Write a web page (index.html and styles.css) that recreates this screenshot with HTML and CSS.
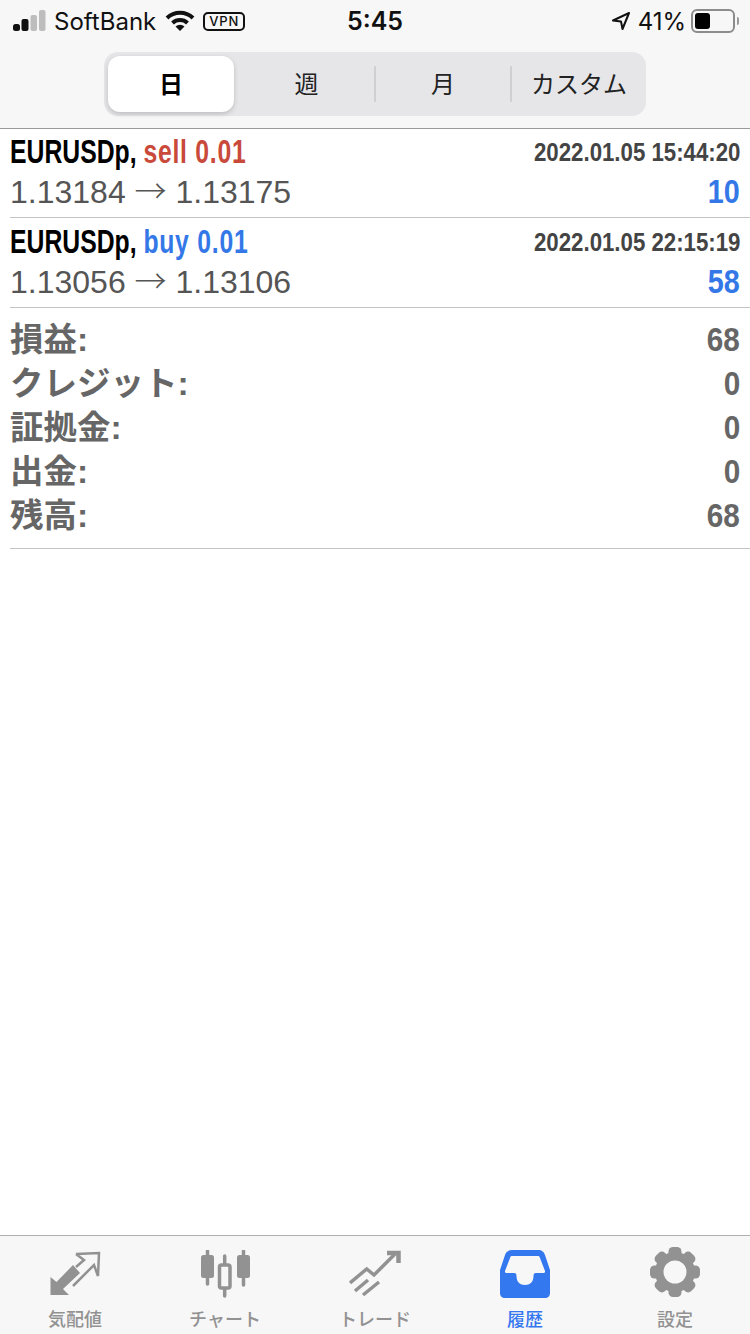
FILE: index.html
```html
<!DOCTYPE html>
<html lang="ja">
<head>
    <meta charset="UTF-8">
    <meta name="viewport" content="width=device-width, initial-scale=1.0">
    <title>履歴</title>
    <link rel="stylesheet" href="styles.css">
</head>
<body>
    <header class="top">
        <div class="status">
            <div class="status-left">
                <svg class="signal" width="33" height="22" viewBox="0 0 33 22">
                    <rect x="0" y="14" width="7" height="7" rx="2.500" fill="#111"/>
                    <rect x="8.500" y="9" width="7" height="12" rx="2" fill="#111"/>
                    <rect x="17.500" y="5" width="6.500" height="16" rx="2" fill="#bdbdbd"/>
                    <rect x="26" y="0" width="6.500" height="21" rx="2" fill="#bdbdbd"/>
                </svg>
                <span class="carrier">SoftBank</span>
                <svg class="wifi" width="30" height="22" viewBox="0 0 30 22">
                    <path d="M2 8 A19 19 0 0 1 28 8" fill="none" stroke="#111" stroke-width="4"/>
                    <path d="M7.500 13 A11 11 0 0 1 22.500 13" fill="none" stroke="#111" stroke-width="4"/>
                    <path d="M15 21 L10.500 16.500 A6.500 6.500 0 0 1 19.500 16.500 Z" fill="#111"/>
                </svg>
                <span class="vpn">VPN</span>
            </div>
            <div class="clock">5:45</div>
            <div class="status-right">
                <svg class="loc" width="20" height="20" viewBox="0 0 20 20">
                    <path d="M18 2 L2 9.500 L10 10.500 L11.500 18 Z" fill="none" stroke="#111" stroke-width="2" stroke-linejoin="round"/>
                </svg>
                <span class="pct">41%</span>
                <div class="battery"><div class="battery-fill"></div></div>
                <div class="battery-tip"></div>
            </div>
        </div>
        <div class="segments">
            <div class="seg seg-active"><span class="seg-text">日</span></div>
            <div class="seg seg-week"><span class="seg-text">週</span></div>
            <div class="seg seg-month"><span class="seg-text">月</span></div>
            <div class="seg seg-custom"><span class="seg-text">カスタム</span></div>
        </div>
    </header>

    <main>
        <div class="deal">
            <div class="line line-top">
                <div class="deal-name">EURUSDp, <span class="sell">sell 0.01</span></div>
                <div class="deal-date">2022.01.05 15:44:20</div>
            </div>
            <div class="line line-bottom">
                <div class="deal-price">1.13184 <span class="arrow">→</span> 1.13175</div>
                <div class="deal-profit">10</div>
            </div>
        </div>
        <div class="deal deal-second">
            <div class="line line-top">
                <div class="deal-name">EURUSDp, <span class="buy">buy 0.01</span></div>
                <div class="deal-date">2022.01.05 22:15:19</div>
            </div>
            <div class="line line-bottom">
                <div class="deal-price">1.13056 <span class="arrow">→</span> 1.13106</div>
                <div class="deal-profit">58</div>
            </div>
        </div>
        <div class="summary">
            <div class="sum-row"><span class="sum-label">損益:</span><span class="sum-value">68</span></div>
            <div class="sum-row"><span class="sum-label">クレジット:</span><span class="sum-value">0</span></div>
            <div class="sum-row"><span class="sum-label">証拠金:</span><span class="sum-value">0</span></div>
            <div class="sum-row"><span class="sum-label">出金:</span><span class="sum-value">0</span></div>
            <div class="sum-row"><span class="sum-label">残高:</span><span class="sum-value">68</span></div>
        </div>
    </main>

    <nav class="tabs">
        <div class="tab">
            <svg width="52" height="48" viewBox="0 0 52 48">
                <path d="M1.500 27 V45 H20 L14 39 L31 23 L24 15 L7.500 32 Z" fill="#929292"/>
                <path d="M27 4 L50 3 L49 26 L45 15 L24 36 M27 4 L35 10 L27 17" fill="none" stroke="#929292" stroke-width="2.500"/>
            </svg>
            <span class="tab-label">気配値</span>
        </div>
        <div class="tab">
            <svg width="52" height="48" viewBox="0 0 52 48">
                <path d="M8.500 1 V34 M25.700 6 V46 M44.500 1 V35" stroke="#929292" stroke-width="3.500" stroke-linecap="round"/>
                <rect x="2" y="5" width="13" height="23" rx="2.500" fill="#929292"/>
                <rect x="20.500" y="15" width="10.500" height="23" rx="2" fill="#f7f7f7" stroke="#929292" stroke-width="3.500"/>
                <rect x="38" y="5" width="13" height="23" rx="2.500" fill="#929292"/>
            </svg>
            <span class="tab-label">チャート</span>
        </div>
        <div class="tab">
            <svg width="52" height="48" viewBox="0 0 52 48">
                <path d="M1 33 L17.700 19 L25 25 L46 4" fill="none" stroke="#929292" stroke-width="3.500"/>
                <path d="M38 3 H49.500 V13" fill="none" stroke="#929292" stroke-width="4.500"/>
                <path d="M6 41 L19 30 M14 45 L30 32" fill="none" stroke="#929292" stroke-width="3.500"/>
            </svg>
            <span class="tab-label">トレード</span>
        </div>
        <div class="tab tab-active">
            <svg width="52" height="48" viewBox="0 0 52 48">
                <path fill-rule="evenodd" fill="#3478f0" d="M13 0 H39 C43 0 45 2 46 5 L51 20 V43 C51 46 49 48 46 48 H6 C3 48 1 46 1 43 V20 L6 5 C7 2 9 0 13 0 Z M13 6 C12 6 11.500 6.500 11 8 L6 21 C5.800 22.500 6.500 23 8 23 H15 C17 23 17.500 24 17.500 26 C17.500 32 21 35 26 35 C31 35 34.500 32 34.500 26 C34.500 24 35 23 37 23 H44 C45.500 23 46.200 22.500 46 21 L41 8 C40.500 6.500 40 6 39 6 Z"/>
            </svg>
            <span class="tab-label">履歴</span>
        </div>
        <div class="tab">
            <svg width="52" height="52" viewBox="0 0 52 52">
                <g fill="#929292">
                    <circle cx="26" cy="26" r="20"/>
                    <rect x="19.500" y="1" width="13" height="50" rx="4.500"/>
                    <rect x="19.500" y="1" width="13" height="50" rx="4.500" transform="rotate(45 26 26)"/>
                    <rect x="19.500" y="1" width="13" height="50" rx="4.500" transform="rotate(90 26 26)"/>
                    <rect x="19.500" y="1" width="13" height="50" rx="4.500" transform="rotate(135 26 26)"/>
                </g>
                <circle cx="26" cy="26" r="11.500" fill="#f7f7f7"/>
            </svg>
            <span class="tab-label">設定</span>
        </div>
    </nav>
</body>
</html>
```

FILE: styles.css
```css
html, body {
    margin: 0;
    padding: 0;
}
body {
    width: 750px;
    height: 1334px;
    display: flex;
    flex-direction: column;
    background: #fff;
    font-family: "Liberation Sans", "Noto Sans CJK JP", sans-serif;
    overflow: hidden;
}
.top {
    height: 128px;
    background: #f7f7f7;
    border-bottom: 1px solid #9a9a9a;
}
.status {
    height: 52px;
    position: relative;
    display: flex;
    justify-content: space-between;
    align-items: flex-start;
    color: #111;
    font-family: Inter, "Liberation Sans", sans-serif;
}
.status-left {
    display: flex;
    align-items: center;
    height: 42px;
    padding-left: 13px;
}
.carrier {
    font-size: 24px;
    margin-left: 8px;
}
.wifi {
    margin-left: 9px;
}
.vpn {
    margin-left: 8px;
    border: 2px solid #111;
    border-radius: 5px;
    font-size: 13px;
    font-weight: 500;
    line-height: 15px;
    padding: 0 4px;
    letter-spacing: 0.800px;
}
.clock {
    position: absolute;
    left: 0;
    right: 0;
    top: 0;
    line-height: 42px;
    text-align: center;
    font-size: 25px;
    font-weight: 600;
}
.status-right {
    display: flex;
    align-items: center;
    height: 42px;
    padding-right: 11px;
}
.pct {
    font-size: 24px;
    margin-left: 7px;
}
.battery {
    margin-left: 5px;
    width: 36px;
    height: 16px;
    padding: 2px;
    border: 2px solid #8c8c8c;
    border-radius: 6px;
}
.battery-fill {
    width: 15px;
    height: 16px;
    background: #000;
    border-radius: 3px;
}
.battery-tip {
    width: 2px;
    height: 8px;
    background: #999;
    margin-left: 2px;
    border-radius: 0 2px 2px 0;
}
.segments {
    width: 534px;
    height: 56px;
    margin-left: 104px;
    padding: 4px;
    display: flex;
    background: #e6e6e8;
    border-radius: 14px;
    font-family: "Noto Sans CJK JP", sans-serif;
    font-size: 24px;
    color: #222;
}
.seg {
    display: flex;
    align-items: center;
    justify-content: center;
}
.seg-text {
    margin-bottom: 4px;
}
.seg-active {
    width: 126px;
    background: #fff;
    border-radius: 12px;
    font-weight: 700;
    color: #000;
    box-shadow: 0 2px 5px rgba(0,0,0,0.18);
}
.seg-week {
    width: 140px;
    padding-left: 5px;
    box-sizing: border-box;
}
.seg-month {
    width: 138px;
    border-left: 2px solid #d0d0d2;
    border-right: 2px solid #d0d0d2;
    margin: 10px 0;
    box-sizing: border-box;
}
.seg-month .seg-text {
    margin-bottom: 0;
    margin-top: -4px;
}
.seg-custom {
    flex: 1;
    padding-left: 4px;
}
main {
    flex: 1;
}
.deal {
    height: 87px;
    margin-left: 10px;
    border-bottom: 1px solid #c4c4c4;
    padding: 1px 10px 0 0;
}
.deal-second {
    padding-top: 2px;
}
.line {
    display: flex;
    justify-content: space-between;
    align-items: center;
}
.line-top {
    height: 44px;
}
.line-bottom {
    height: 36px;
}
.deal-name {
    font-weight: 700;
    font-size: 33px;
    color: #000;
    white-space: nowrap;
    transform: scaleX(0.75);
    transform-origin: left center;
}
.sell {
    color: #c9493a;
    letter-spacing: 1px;
}
.buy {
    color: #3478e8;
    letter-spacing: 1px;
}
.deal-date {
    font-weight: 700;
    font-size: 26px;
    color: #444;
    transform: scaleX(0.855);
    transform-origin: right center;
}
.deal-price {
    font-size: 32px;
    color: #555;
}
.arrow {
    font-family: "Noto Sans CJK JP", sans-serif;
    font-weight: 300;
    line-height: 1;
}
.deal-profit {
    font-weight: 700;
    font-size: 33px;
    color: #3478e8;
    transform: scaleX(0.87);
    transform-origin: right center;
}
.summary {
    margin-left: 10px;
    padding: 10px 10px 10px 0;
    border-bottom: 1px solid #c4c4c4;
    box-sizing: border-box;
    height: 241px;
    color: #666;
}
.sum-row {
    height: 44px;
    display: flex;
    justify-content: space-between;
    align-items: center;
    font-weight: 700;
}
.sum-label {
    font-size: 33.500px;
    margin-bottom: 8px;
}
.sum-value {
    font-size: 33px;
    transform: scaleX(0.9);
    transform-origin: right center;
}
.tabs {
    height: 98px;
    background: #f7f7f7;
    border-top: 1px solid #b0b0b0;
    display: flex;
    justify-content: space-between;
}
.tab {
    width: 150px;
    display: flex;
    flex-direction: column;
    align-items: center;
    justify-content: flex-end;
    padding-bottom: 4px;
    box-sizing: border-box;
    color: #929292;
    gap: 8px;
}
.tab-label {
    font-family: "Noto Sans CJK JP", sans-serif;
    font-size: 18px;
    font-weight: 500;
    line-height: 24px;
}
.tab-active {
    color: #3478f0;
}
```
